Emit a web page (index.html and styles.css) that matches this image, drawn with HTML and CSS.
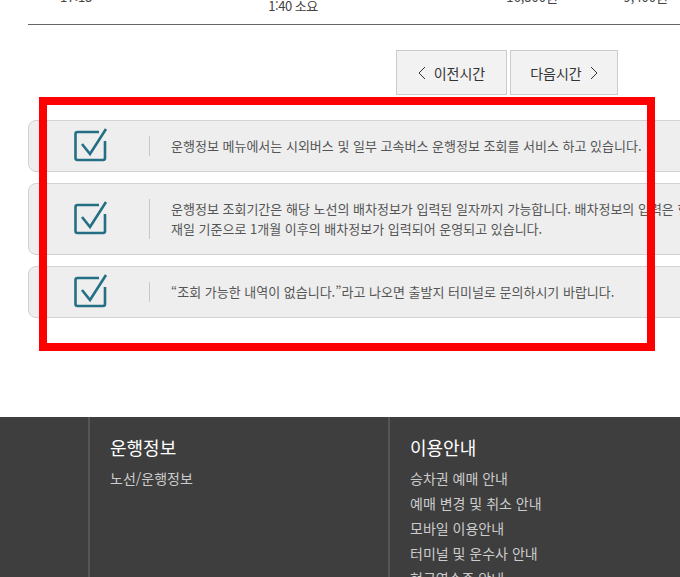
FILE: index.html
```html
<!DOCTYPE html>
<html lang="ko">

<head>
    <meta charset="UTF-8">
    <meta name="viewport" content="width=device-width, initial-scale=1.0">
    <title>운행정보</title>
    <link rel="stylesheet" href="styles.css">
</head>

<body>
<div class="content">
    <!-- last row of the timetable (scrolled) -->
    <div class="result-row">
        <div class="cell time">17:15</div>
        <div class="cell duration">
            <span>09:00 도착</span>
            <span>1:40 소요</span>
        </div>
        <div class="cell fare">16,500원</div>
        <div class="cell fare">9,400원</div>
    </div>

    <div class="paging">
        <button class="page-btn">
            <svg width="8" height="14" viewBox="0 0 8 14"><path d="M7 1 L1 7 L7 13" fill="none" stroke="#333" stroke-width="1"/></svg>
            이전시간
        </button>
        <button class="page-btn">
            다음시간
            <svg width="8" height="14" viewBox="0 0 8 14"><path d="M1 1 L7 7 L1 13" fill="none" stroke="#333" stroke-width="1"/></svg>
        </button>
    </div>

    <!-- notice boxes -->
    <ul class="notice-list">
        <li class="notice">
            <span class="check-icon">
                <svg width="34" height="35" viewBox="0 0 34 35"><path d="M25 5 H3.5 Q1.5 5 1.5 7 V31 Q1.5 33 3.5 33 H29 Q31 33 31 31 V14" fill="none" stroke="#256f85" stroke-width="2.6"/><path d="M8 17 L16 27 L32 2" fill="none" stroke="#256f85" stroke-width="2.6"/></svg>
            </span>
            <p class="notice-text">운행정보 메뉴에서는 시외버스 및 일부 고속버스 운행정보 조회를 서비스 하고 있습니다.</p>
        </li>
        <li class="notice">
            <span class="check-icon">
                <svg width="34" height="35" viewBox="0 0 34 35"><path d="M25 5 H3.5 Q1.5 5 1.5 7 V31 Q1.5 33 3.5 33 H29 Q31 33 31 31 V14" fill="none" stroke="#256f85" stroke-width="2.6"/><path d="M8 17 L16 27 L32 2" fill="none" stroke="#256f85" stroke-width="2.6"/></svg>
            </span>
            <p class="notice-text">운행정보 조회기간은 해당 노선의 배차정보가 입력된 일자까지 가능합니다. 배차정보의 입력은 현재일 기준으로 1개월 이후의 배차정보가 입력되어 운영되고 있습니다.</p>
        </li>
        <li class="notice">
            <span class="check-icon">
                <svg width="34" height="35" viewBox="0 0 34 35"><path d="M25 5 H3.5 Q1.5 5 1.5 7 V31 Q1.5 33 3.5 33 H29 Q31 33 31 31 V14" fill="none" stroke="#256f85" stroke-width="2.6"/><path d="M8 17 L16 27 L32 2" fill="none" stroke="#256f85" stroke-width="2.6"/></svg>
            </span>
            <p class="notice-text">“조회 가능한 내역이 없습니다.”라고 나오면 출발지 터미널로 문의하시기 바랍니다.</p>
        </li>
    </ul>
</div>

<!-- highlight marker over the notices -->
<div class="highlight"></div>

<footer class="footer">
    <div class="footer-col">
        <h3>운행정보</h3>
        <ul>
            <li>노선/운행정보</li>
        </ul>
    </div>
    <div class="footer-col">
        <h3>이용안내</h3>
        <ul>
            <li>승차권 예매 안내</li>
            <li>예매 변경 및 취소 안내</li>
            <li>모바일 이용안내</li>
            <li>터미널 및 운수사 안내</li>
            <li>현금영수증 안내</li>
        </ul>
    </div>
</footer>
</body>

</html>
```

FILE: styles.css
```css
/* page base */
body {
    margin: 0;
    font-family: "Noto Sans CJK KR", "Noto Sans", sans-serif;
    color: #555;
    overflow: hidden;
    position: relative;
    height: 577px;
}

.content {
    display: flow-root;
    margin-left: 28px;
    width: 720px;
    height: 417px;
}

/* timetable row, partially scrolled off */
.result-row {
    display: grid;
    grid-template-columns: 170px 190px 170px 110px;
    align-items: center;
    margin-top: -30px;
    height: 54px;
    border-bottom: 1px solid #666;
    font-size: 13px;
    line-height: 18px;
    color: #444;
}

.cell.time {
    padding-left: 32px;
}

.cell.duration {
    display: flex;
    flex-direction: column;
    align-items: center;
    letter-spacing: -0.5px;
}

.cell.fare {
    text-align: right;
}

.paging {
    display: flex;
    justify-content: flex-end;
    gap: 3px;
    width: 590px;
    margin-top: 25px;
}

.page-btn {
    display: flex;
    align-items: center;
    justify-content: center;
    gap: 8px;
    height: 45px;
    padding: 0;
    background-color: #f2f2f2;
    border: 1px solid #ccc;
    font-family: inherit;
    font-size: 14px;
    color: #333;
}

.page-btn:first-child {
    width: 111px;
}

.page-btn:last-child {
    width: 108px;
}

.notice-list {
    list-style: none;
    margin: 25px 0 0;
    padding: 0;
    width: 700px;
}

.notice {
    display: flex;
    align-items: center;
    margin-bottom: 11px;
    background-color: #eee;
    border: 1px solid #d2d2d2;
    border-radius: 8px;
}

.check-icon {
    display: flex;
    width: 120px;
    height: 35px;
    padding-left: 45px;
    box-sizing: border-box;
    position: relative;
    top: -2px;
}

.notice-text {
    margin: 15px 0;
    padding-left: 21px;
    border-left: 1px solid #c8c8c8;
    font-size: 13px;
    line-height: 20px;
    width: 530px;
    color: #555;
}

/* red marker */
.highlight {
    position: absolute;
    left: 39px;
    top: 97px;
    width: 616px;
    height: 254px;
    border: 8px solid #ff0000;
    box-sizing: border-box;
}

/* footer */
.footer {
    display: flex;
    height: 160px;
    padding-left: 88px;
    background-color: #3e3e3e;
}

.footer-col {
    box-sizing: border-box;
    flex: 0 0 300px;
    padding: 16px 20px 0;
    border-left: 2px solid #555;
}

.footer-col h3 {
    margin: 0 0 5px;
    font-size: 18px;
    font-weight: normal;
    line-height: 28px;
    color: #fff;
}

.footer-col ul {
    list-style: none;
    margin: 0;
    padding: 0;
}

.footer-col li {
    font-size: 14px;
    line-height: 25px;
    color: #ccc;
}
```
